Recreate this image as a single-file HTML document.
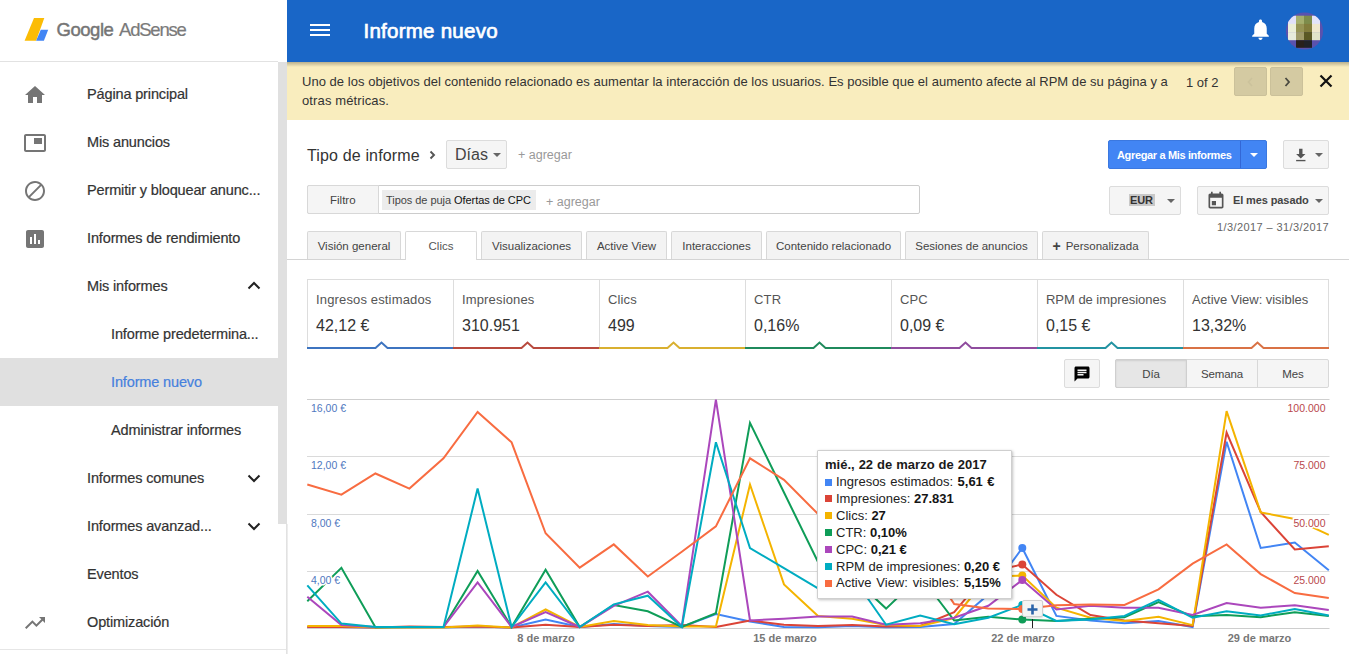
<!DOCTYPE html>
<html lang="es">
<head>
<meta charset="utf-8">
<title>Informe nuevo - Google AdSense</title>
<style>
*{box-sizing:border-box;margin:0;padding:0}
html,body{width:1349px;height:654px;overflow:hidden;background:#fff}
body{font-family:"Liberation Sans",sans-serif;color:#333;position:relative}
.abs{position:absolute}
.t{position:absolute;white-space:nowrap;line-height:1}
/* sidebar */
#side{position:absolute;left:0;top:0;width:287px;height:654px;background:#fff}
#side .edge{position:absolute;left:286px;top:524px;width:2px;height:130px;background:linear-gradient(to right,#dcdcdc,#f2f2f2)}
#side .logo-line{position:absolute;left:0;top:61px;width:278px;height:1px;background:#e2e2e2}
#side .thumb{position:absolute;left:278px;top:62px;width:9.400px;height:462px;background:#e0e0e0}
#side .sel{position:absolute;left:0;top:358px;width:278px;height:48px;background:#e0e0e0}
.nav{position:absolute;font-size:14.5px;letter-spacing:-0.14px;-webkit-text-stroke:0.2px currentColor;color:#333;white-space:nowrap;line-height:18px;height:18px}
.nav.l1{left:87px}
.nav.l2{left:111px}
/* header */
#hdr{position:absolute;left:287px;top:0;width:1062px;height:62px;background:#1966c7}
#hdr-shadow{position:absolute;left:287px;top:62px;width:1062px;height:5px;background:linear-gradient(rgba(0,0,0,.26),rgba(0,0,0,0))}
#notice{position:absolute;left:287px;top:62px;width:1062px;height:58px;background:#f9edbe}
.btn{position:absolute;background:#f5f5f5;border:1px solid #dcdcdc;border-radius:2px}
.tab{position:absolute;top:231px;height:28px;background:#f3f3f3;border:1px solid #d8d8d8;border-bottom:none;border-radius:2px 2px 0 0;font-size:11.5px;color:#444;text-align:center;line-height:29px;white-space:nowrap}
.card{position:absolute;top:279px;height:69px;width:147px;border:1px solid #ddd;border-bottom:none;background:#fff}
.card .l{position:absolute;left:8px;top:12px;letter-spacing:0.15px;font-size:13px;color:#555;white-space:nowrap;line-height:15px}
.card .v{position:absolute;left:8px;top:36px;font-size:16px;color:#333;white-space:nowrap;line-height:19px}
.tt{position:absolute;font-size:13px;color:#222;white-space:nowrap;line-height:15px;font-family:"Liberation Sans",sans-serif}
.tt b{color:#151515}
.sq{position:absolute;width:7px;height:7px;left:825px}
.axl{position:absolute;font-size:10.500px;line-height:12px;white-space:nowrap;-webkit-text-stroke:3px #fff;paint-order:stroke fill}
</style>
</head>
<body>

<!-- ================= SIDEBAR ================= -->
<div id="side">
  <svg class="abs" style="left:24px;top:17px" width="26" height="26" viewBox="0 0 26 26">
    <polygon points="10,1 20.3,1 12.1,23.7 0.6,23.7" fill="#fbbc05"/>
    <polygon points="16.8,12.8 24.2,12.8 19.9,23.7 12.1,23.7" fill="#4285f4"/>
  </svg>
  <div class="t" style="left:56.500px;top:21px;font-size:18.500px;color:#757575;letter-spacing:-0.45px;-webkit-text-stroke:0.45px #757575">Google</div>
  <div class="t" style="left:119px;top:21px;font-size:18.500px;color:#7a7a7a;letter-spacing:-1.2px;-webkit-text-stroke:0.2px #7a7a7a">AdSense</div>
  <div class="logo-line"></div>
  <div class="thumb"></div><div class="edge"></div>
  <div class="sel"></div>

  <!-- icons -->
  <svg class="abs" style="left:23px;top:83px" width="24" height="24" viewBox="0 0 24 24"><path d="M10 20v-6h4v6h5v-8h3L12 3 2 12h3v8z" fill="#757575"/></svg>
  <svg class="abs" style="left:23px;top:131px" width="24" height="24" viewBox="0 0 24 24"><path d="M19 7h-8v6h8V7zm2-4H3c-1.1 0-2 .9-2 2v14c0 1.1.9 1.98 2 1.98h18c1.1 0 2-.88 2-1.98V5c0-1.1-.9-2-2-2zm0 16.01H3V4.98h18v14.03z" fill="#757575"/></svg>
  <svg class="abs" style="left:23px;top:179px" width="24" height="24" viewBox="0 0 24 24"><path d="M12 2C6.48 2 2 6.48 2 12s4.480 10 10 10 10-4.480 10-10S17.520 2 12 2zM4 12c0-4.420 3.580-8 8-8 1.850 0 3.550.63 4.900 1.690L5.690 16.900C4.630 15.550 4 13.850 4 12zm8 8c-1.850 0-3.550-.63-4.900-1.690L18.310 7.100C19.370 8.450 20 10.150 20 12c0 4.420-3.580 8-8 8z" fill="#757575"/></svg>
  <svg class="abs" style="left:23px;top:227px" width="24" height="24" viewBox="0 0 24 24"><path d="M19 3H5c-1.100 0-2 .9-2 2v14c0 1.100.9 2 2 2h14c1.100 0 2-.9 2-2V5c0-1.100-.9-2-2-2zM9 17H7v-7h2v7zm4 0h-2V7h2v10zm4 0h-2v-4h2v4z" fill="#757575"/></svg>
  <svg class="abs" style="left:23px;top:611px" width="24" height="24" viewBox="0 0 24 24"><path d="M16 6l2.290 2.290-4.880 4.880-4-4L2 16.590 3.410 18l6-6 4 4 6.300-6.290L22 12V6z" fill="#757575"/></svg>

  <div class="nav l1" style="top:85px">Página principal</div>
  <div class="nav l1" style="top:133px">Mis anuncios</div>
  <div class="nav l1" style="top:181px">Permitir y bloquear anunc...</div>
  <div class="nav l1" style="top:229px">Informes de rendimiento</div>
  <div class="nav l1" style="top:277px">Mis informes</div>
  <div class="nav l2" style="top:325px">Informe predetermina...</div>
  <div class="nav l2" style="top:373px;color:#4680dd">Informe nuevo</div>
  <div class="nav l2" style="top:421px">Administrar informes</div>
  <div class="nav l1" style="top:469px">Informes comunes</div>
  <div class="nav l1" style="top:517px">Informes avanzad...</div>
  <div class="nav l1" style="top:565px">Eventos</div>
  <div class="nav l1" style="top:613px">Optimización</div>

  <!-- chevrons -->
  <svg class="abs" style="left:242px;top:274px" width="24" height="24" viewBox="0 0 24 24"><path d="M6.500 14.500L12 9l5.500 5.500" fill="none" stroke="#222" stroke-width="2"/></svg>
  <svg class="abs" style="left:242px;top:466px" width="24" height="24" viewBox="0 0 24 24"><path d="M6.500 9.500L12 15l5.500-5.500" fill="none" stroke="#222" stroke-width="2"/></svg>
  <svg class="abs" style="left:242px;top:514px" width="24" height="24" viewBox="0 0 24 24"><path d="M6.500 9.500L12 15l5.500-5.500" fill="none" stroke="#222" stroke-width="2"/></svg>
  <div class="abs" style="left:0;top:649px;width:286px;height:1px;background:#e6e6e6"></div>
</div>

<!-- ================= HEADER ================= -->
<div id="notice"></div>
<div id="hdr">
  <svg class="abs" style="left:23px;top:24px" width="20" height="12" viewBox="0 0 20 12"><path d="M0 1h20M0 6h20M0 11h20" stroke="#fff" stroke-width="2" fill="none"/></svg>
  <div class="t" style="left:76.500px;top:21.300px;font-size:20.500px;color:#fff;letter-spacing:0.25px;-webkit-text-stroke:0.7px #fff">Informe nuevo</div>
  <svg class="abs" style="left:961.200px;top:17px" width="25" height="25" viewBox="0 0 24 24"><path d="M12 22c1.100 0 2-.9 2-2h-4c0 1.100.89 2 2 2zm6-6v-5c0-3.070-1.640-5.640-4.500-6.320V4c0-.83-.67-1.500-1.500-1.500s-1.500.67-1.500 1.500v.68C7.630 5.360 6 7.920 6 11v5l-2 2v1h16v-1l-2-2z" fill="#fff"/></svg>
  <svg class="abs" style="left:998px;top:12px" width="40" height="40" viewBox="0 0 40 40">
    <defs><clipPath id="av"><circle cx="19.500" cy="19" r="18.600"/></clipPath></defs>
    <g clip-path="url(#av)">
      <rect width="40" height="40" fill="#5a52ae"/>
      <rect x="3" y="3.700" width="8" height="8.300" fill="#e1e1fa"/><rect x="11" y="3.700" width="8" height="8.300" fill="#a5af6e"/><rect x="19" y="3.700" width="8" height="8.300" fill="#7d8c4b"/><rect x="27" y="3.700" width="8" height="8.300" fill="#e1e4fa"/>
      <rect x="3" y="11.900" width="8" height="8.300" fill="#ebeed7"/><rect x="11" y="11.900" width="8" height="8.300" fill="#969455"/><rect x="19" y="11.900" width="8" height="8.300" fill="#827d3c"/><rect x="27" y="11.900" width="8" height="8.300" fill="#eee8cd"/>
      <rect x="3" y="20.100" width="8" height="8.100" fill="#e8ebdc"/><rect x="11" y="20.100" width="8" height="8.100" fill="#a09b69"/><rect x="19" y="20.100" width="8" height="8.100" fill="#5a5823"/><rect x="27" y="20.100" width="8" height="8.100" fill="#e1e4c8"/>
      <rect x="11" y="28.200" width="8" height="7.600" fill="#28201c"/><rect x="19" y="28.200" width="8" height="7.600" fill="#202228"/>
    </g>
  </svg>
</div>
<div id="hdr-shadow"></div>

<!-- notice text -->
<div class="t" style="left:302px;top:75px;font-size:13px;color:#333;letter-spacing:0.035px">Uno de los objetivos del contenido relacionado es aumentar la interacción de los usuarios. Es posible que el aumento afecte al RPM de su página y a</div>
<div class="t" style="left:302px;top:94px;font-size:13px;color:#333;letter-spacing:0.12px">otras métricas.</div>
<div class="t" style="left:1186px;top:76px;font-size:13px;color:#333">1 of 2</div>
<div class="abs" style="left:1234px;top:67px;width:33px;height:29px;background:#d4caa2;border-radius:2px;border:1px solid #cbc19a"></div>
<div class="abs" style="left:1270px;top:67px;width:33px;height:29px;background:#d4caa2;border-radius:2px;border:1px solid #cbc19a"></div>
<svg class="abs" style="left:1244px;top:75px" width="14" height="14" viewBox="0 0 14 14"><path d="M8 3L4.500 7 8 11" fill="none" stroke="#cbc29c" stroke-width="1.600"/></svg>
<svg class="abs" style="left:1280px;top:75px" width="14" height="14" viewBox="0 0 14 14"><path d="M5.500 3L9 7l-3.500 4" fill="none" stroke="#4a4a40" stroke-width="1.800"/></svg>
<svg class="abs" style="left:1319px;top:74px" width="14" height="14" viewBox="0 0 14 14"><path d="M1.500 1.500l11 11M12.500 1.500l-11 11" fill="none" stroke="#111" stroke-width="2.200"/></svg>


<!-- ================= CONTROLS ================= -->
<div class="t" style="left:307px;top:148px;font-size:16px;color:#333;letter-spacing:0.15px">Tipo de informe</div>
<svg class="abs" style="left:427px;top:148.700px" width="10" height="12" viewBox="0 0 10 12"><path d="M3.500 2.500L7 6l-3.500 3.500" fill="none" stroke="#555" stroke-width="1.900"/></svg>
<div class="btn" style="left:446px;top:140px;width:61px;height:29px"></div>
<div class="t" style="left:455px;top:147px;font-size:16px;color:#444">Días</div>
<svg class="abs" style="left:493px;top:153px" width="8" height="4" viewBox="0 0 8 4"><path d="M0 0h8L4 4z" fill="#666"/></svg>
<div class="t" style="left:518px;top:149px;font-size:12.5px;color:#999">+ agregar</div>

<div class="abs" style="left:307px;top:185px;width:613px;height:29px;border:1px solid #ccc;border-radius:2px;background:#fff"></div>
<div class="abs" style="left:307px;top:185px;width:72px;height:29px;border:1px solid #d8d8d8;border-radius:2px 0 0 2px;background:#f5f5f5"></div>
<div class="t" style="left:330px;top:195px;font-size:11.5px;color:#444">Filtro</div>
<div class="abs" style="left:382px;top:190px;width:154px;height:20px;background:#ececec"></div>
<div class="t" style="left:386px;top:195px;font-size:11px;color:#444;letter-spacing:-0.05px">Tipos de puja <span style="color:#111">Ofertas de CPC</span></div>
<div class="t" style="left:546px;top:195.500px;font-size:12.500px;color:#999">+ agregar</div>

<div class="abs" style="left:1108px;top:140px;width:159px;height:29px;background:#4285f4;border-radius:2px;border:1px solid #3b78e0"></div>
<div class="abs" style="left:1240px;top:141px;width:1px;height:27px;background:#3367d6"></div>
<div class="t" style="left:1117px;top:150px;font-size:11px;color:#fff;font-weight:bold;letter-spacing:-0.35px">Agregar a Mis informes</div>
<svg class="abs" style="left:1250px;top:153px" width="8" height="4" viewBox="0 0 8 4"><path d="M0 0h8L4 4z" fill="#fff"/></svg>

<div class="btn" style="left:1283px;top:140px;width:46px;height:29px"></div>
<svg class="abs" style="left:1293.500px;top:147.500px" width="13.600" height="14.450" viewBox="0 0 16 17"><path d="M6 1h4v6h3.500L8 12.500 2.500 7H6z" fill="#555"/><rect x="2.500" y="14" width="11" height="1.600" fill="#555"/></svg>
<svg class="abs" style="left:1315px;top:153px" width="8" height="4" viewBox="0 0 8 4"><path d="M0 0h8L4 4z" fill="#666"/></svg>

<div class="btn" style="left:1109px;top:186px;width:72px;height:29px"></div>
<div class="abs" style="left:1129px;top:194px;width:26px;height:12px;background:#c9c9c9"></div>
<div class="t" style="left:1130px;top:195px;font-size:11px;color:#333;font-weight:bold;letter-spacing:-0.1px">EUR</div>
<svg class="abs" style="left:1167px;top:199px" width="8" height="4" viewBox="0 0 8 4"><path d="M0 0h8L4 4z" fill="#666"/></svg>

<div class="btn" style="left:1197px;top:186px;width:132px;height:29px"></div>
<svg class="abs" style="left:1205.500px;top:191px" width="20" height="20" viewBox="0 0 24 24"><path d="M17 12h-5v5h5v-5zM16 1v2H8V1H6v2H5c-1.110 0-1.990.9-1.990 2L3 19c0 1.100.89 2 2 2h14c1.100 0 2-.9 2-2V5c0-1.100-.9-2-2-2h-1V1h-2zm3 18H5V8h14v11z" fill="#555" transform="translate(24,0) scale(-1,1)"/></svg>
<div class="t" style="left:1233px;top:195px;font-size:11px;color:#333;font-weight:bold;letter-spacing:-0.11px;color:#444">El mes pasado</div>
<svg class="abs" style="left:1315px;top:199px" width="8" height="4" viewBox="0 0 8 4"><path d="M0 0h8L4 4z" fill="#666"/></svg>
<div class="t" style="left:1217px;top:222px;font-size:11px;color:#666;letter-spacing:0.4px">1/3/2017 – 31/3/2017</div>


<!-- ================= TABS ================= -->
<div class="abs" style="left:287px;top:259px;width:1062px;height:1px;background:#d4d4d4"></div>
<div class="tab" style="left:307px;width:94px">Visión general</div>
<div class="tab" style="left:405px;width:72px;background:#fff;color:#555;height:29px">Clics</div>
<div class="tab" style="left:481px;width:101px">Visualizaciones</div>
<div class="tab" style="left:586px;width:81px">Active View</div>
<div class="tab" style="left:671px;width:91px">Interacciones</div>
<div class="tab" style="left:766px;width:135px">Contenido relacionado</div>
<div class="tab" style="left:905px;width:133px">Sesiones de anuncios</div>
<div class="tab" style="left:1042px;width:107px"><span style="font-size:14px;font-weight:bold;vertical-align:-1px;margin-right:5px">+</span>Personalizada</div>


<!-- ================= CARDS ================= -->
<div class="card" style="left:307px"><div class="l">Ingresos estimados</div><div class="v">42,12 €</div></div>
<svg class="abs" style="left:307px;top:339px" width="147" height="11" viewBox="0 0 147 11"><path d="M0 9H68.500 L74.500 3.500 L80.500 9 H147" fill="#fff" stroke="#3d74c0" stroke-width="2" stroke-linejoin="miter"/></svg>
<div class="card" style="left:453px"><div class="l">Impresiones</div><div class="v">310.951</div></div>
<svg class="abs" style="left:453px;top:339px" width="147" height="11" viewBox="0 0 147 11"><path d="M0 9H68.500 L74.500 3.500 L80.500 9 H147" fill="#fff" stroke="#b84a3e" stroke-width="2" stroke-linejoin="miter"/></svg>
<div class="card" style="left:599px"><div class="l">Clics</div><div class="v">499</div></div>
<svg class="abs" style="left:599px;top:339px" width="147" height="11" viewBox="0 0 147 11"><path d="M0 9H68.500 L74.500 3.500 L80.500 9 H147" fill="#fff" stroke="#d9b030" stroke-width="2" stroke-linejoin="miter"/></svg>
<div class="card" style="left:745px"><div class="l">CTR</div><div class="v">0,16%</div></div>
<svg class="abs" style="left:745px;top:339px" width="147" height="11" viewBox="0 0 147 11"><path d="M0 9H68.500 L74.500 3.500 L80.500 9 H147" fill="#fff" stroke="#1f8a5c" stroke-width="2" stroke-linejoin="miter"/></svg>
<div class="card" style="left:891px"><div class="l">CPC</div><div class="v">0,09 €</div></div>
<svg class="abs" style="left:891px;top:339px" width="147" height="11" viewBox="0 0 147 11"><path d="M0 9H68.500 L74.500 3.500 L80.500 9 H147" fill="#fff" stroke="#8f4c9e" stroke-width="2" stroke-linejoin="miter"/></svg>
<div class="card" style="left:1037px"><div class="l" style="letter-spacing:-0.03px">RPM de impresiones</div><div class="v">0,15 €</div></div>
<svg class="abs" style="left:1037px;top:339px" width="147" height="11" viewBox="0 0 147 11"><path d="M0 9H68.500 L74.500 3.500 L80.500 9 H147" fill="#fff" stroke="#2393a2" stroke-width="2" stroke-linejoin="miter"/></svg>
<div class="card" style="left:1183px;width:146px"><div class="l" style="letter-spacing:-0.03px">Active View: visibles</div><div class="v">13,32%</div></div>
<svg class="abs" style="left:1183px;top:339px" width="146" height="11" viewBox="0 0 146 11"><path d="M0 9H68.500 L74.500 3.500 L80.500 9 H147" fill="#fff" stroke="#d97245" stroke-width="2" stroke-linejoin="miter"/></svg>


<!-- ================= CHART ================= -->
<div class="btn" style="left:1064px;top:359px;width:36px;height:29px"></div>
<svg class="abs" style="left:1073px;top:365px" width="18" height="18" viewBox="0 0 24 24"><path d="M20 2H4c-1.100 0-1.990.9-1.990 2L2 22l4-4h14c1.100 0 2-.9 2-2V4c0-1.100-.9-2-2-2zM6 9h12v2H6V9zm8 5H6v-2h8v2zm4-6H6V6h12v2z" fill="#000"/></svg>
<div class="abs" style="left:1115px;top:359px;width:214px;height:29px;background:#f5f5f5;border:1px solid #d8d8d8;border-radius:2px"></div>
<div class="abs" style="left:1115px;top:359px;width:72px;height:29px;background:#e6e6e6;border:1px solid #cfcfcf;border-radius:2px 0 0 2px;box-shadow:inset 0 1px 2px rgba(0,0,0,.1)"></div>
<div class="abs" style="left:1257px;top:360px;width:1px;height:27px;background:#d8d8d8"></div>
<div class="t" style="left:1115px;width:72px;text-align:center;top:369px;font-size:11.500px;letter-spacing:-0.15px;color:#444">Día</div>
<div class="t" style="left:1187px;width:70px;text-align:center;top:369px;font-size:11.500px;letter-spacing:-0.15px;color:#444">Semana</div>
<div class="t" style="left:1258px;width:70px;text-align:center;top:369px;font-size:11.500px;letter-spacing:-0.15px;color:#444">Mes</div>

<svg class="abs" style="left:0;top:0" width="1349" height="654" viewBox="0 0 1349 654"><line x1="307" x2="1329.5" y1="399.5" y2="399.5" stroke="#cfcfcf" stroke-width="1"/><line x1="307" x2="1329.5" y1="456.5" y2="456.5" stroke="#dadada" stroke-width="1"/><line x1="307" x2="1329.5" y1="514.5" y2="514.5" stroke="#dadada" stroke-width="1"/><line x1="307" x2="1329.5" y1="571.5" y2="571.5" stroke="#dadada" stroke-width="1"/><line x1="307" x2="1329.5" y1="628.5" y2="628.5" stroke="#cecece" stroke-width="1"/><polyline points="307.3,627.0 341.4,627.0 375.4,627.5 409.4,627.5 443.5,627.5 477.6,626.5 511.6,627.5 545.6,619.6 579.7,627.0 613.8,624.0 647.8,626.0 681.8,627.0 715.9,614.0 750.0,621.4 784.0,627.0 818.0,627.3 852.1,626.0 886.1,627.3 920.2,627.0 954.2,624.0 988.3,594.5 1022.3,548.0 1056.4,615.9 1090.5,620.5 1124.5,623.3 1158.5,620.9 1192.6,627.0 1226.6,441.8 1260.7,548.0 1294.8,542.5 1328.8,570.3" fill="none" stroke="#4285f4" stroke-width="2"/><polyline points="307.3,627.0 341.4,627.0 375.4,627.5 409.4,626.5 443.5,627.0 477.6,626.5 511.6,627.5 545.6,624.7 579.7,627.0 613.8,624.7 647.8,626.0 681.8,625.0 715.9,627.0 750.0,620.5 784.0,624.7 818.0,626.0 852.1,625.0 886.1,626.5 920.2,626.0 954.2,612.2 988.3,571.7 1022.3,564.5 1056.4,594.8 1090.5,615.0 1124.5,620.5 1158.5,623.3 1192.6,626.0 1226.6,432.6 1260.7,512.0 1294.8,549.5 1328.8,546.2" fill="none" stroke="#db4437" stroke-width="2"/><polyline points="307.3,626.0 341.4,626.0 375.4,627.5 409.4,627.5 443.5,627.5 477.6,625.5 511.6,627.5 545.6,609.5 579.7,627.0 613.8,620.9 647.8,625.0 681.8,626.5 715.9,626.5 750.0,484.5 784.0,584.4 818.0,616.0 852.1,618.7 886.1,625.0 920.2,626.0 954.2,618.0 988.3,576.5 1022.3,575.5 1056.4,607.7 1090.5,617.8 1124.5,621.0 1158.5,616.8 1192.6,625.1 1226.6,411.1 1260.7,512.4 1294.8,519.0 1328.8,534.8" fill="none" stroke="#f4b400" stroke-width="2"/><polyline points="307.3,601.2 341.4,567.8 375.4,627.3 409.4,627.0 443.5,627.0 477.6,571.0 511.6,627.0 545.6,569.7 579.7,627.0 613.8,605.0 647.8,611.3 681.8,627.0 715.9,613.2 750.0,422.9 784.0,492.5 818.0,562.0 852.1,576.8 886.1,608.6 920.2,576.0 954.2,620.5 988.3,616.8 1022.3,619.6 1056.4,621.0 1090.5,618.7 1124.5,617.2 1158.5,602.2 1192.6,616.3 1226.6,615.0 1260.7,617.2 1294.8,612.2 1328.8,616.0" fill="none" stroke="#0f9d58" stroke-width="2"/><polyline points="307.3,596.7 341.4,625.0 375.4,627.0 409.4,627.0 443.5,627.0 477.6,582.5 511.6,627.0 545.6,612.2 579.7,627.0 613.8,605.8 647.8,591.7 681.8,626.0 715.9,399.6 750.0,620.5 784.0,618.7 818.0,616.5 852.1,616.5 886.1,624.7 920.2,623.3 954.2,617.8 988.3,605.8 1022.3,580.1 1056.4,609.5 1090.5,605.8 1124.5,607.7 1158.5,607.7 1192.6,615.0 1226.6,603.0 1260.7,607.7 1294.8,605.3 1328.8,610.0" fill="none" stroke="#ab47bc" stroke-width="2"/><polyline points="307.3,585.3 341.4,623.6 375.4,627.0 409.4,627.0 443.5,627.0 477.6,488.6 511.6,627.0 545.6,582.5 579.7,627.0 613.8,604.4 647.8,595.7 681.8,627.0 715.9,442.3 750.0,548.0 784.0,568.2 818.0,588.4 852.1,576.0 886.1,624.7 920.2,615.5 954.2,624.2 988.3,617.8 1022.3,604.9 1056.4,621.0 1090.5,619.6 1124.5,616.0 1158.5,599.8 1192.6,617.8 1226.6,611.3 1260.7,615.5 1294.8,609.0 1328.8,615.5" fill="none" stroke="#00acc1" stroke-width="2"/><polyline points="307.3,484.5 341.4,494.6 375.4,473.5 409.4,488.6 443.5,458.3 477.6,411.9 511.6,442.3 545.6,533.3 579.7,567.7 613.8,544.4 647.8,576.5 681.8,551.7 715.9,526.4 750.0,458.3 784.0,479.8 818.0,514.0 852.1,530.0 886.1,542.0 920.2,552.0 954.2,604.0 988.3,608.6 1022.3,609.0 1056.4,605.3 1090.5,604.5 1124.5,604.9 1158.5,589.3 1192.6,563.6 1226.6,544.4 1260.7,574.1 1294.8,593.0 1328.8,598.1" fill="none" stroke="#f86c41" stroke-width="2"/><circle cx="1022.3" cy="548.0" r="4" fill="#4285f4"/><circle cx="1022.3" cy="564.5" r="4" fill="#db4437"/><circle cx="1022.3" cy="575.5" r="4" fill="#f4b400"/><circle cx="1022.3" cy="619.6" r="4" fill="#0f9d58"/><circle cx="1022.3" cy="580.1" r="4" fill="#ab47bc"/><circle cx="1022.3" cy="604.9" r="4" fill="#00acc1"/><circle cx="1022.3" cy="609.0" r="4" fill="#f86c41"/></svg>

<div class="axl" style="left:311px;top:402px;color:#4f78c0">16,00 €</div>
<div class="axl" style="left:311px;top:459px;color:#4f78c0">12,00 €</div>
<div class="axl" style="left:311px;top:517px;color:#4f78c0">8,00 €</div>
<div class="axl" style="left:311px;top:574px;color:#4f78c0">4,00 €</div>
<div class="axl" style="right:23.500px;top:402px;color:#b9484c">100.000</div>
<div class="axl" style="right:23.500px;top:459px;color:#b9484c">75.000</div>
<div class="axl" style="right:23.500px;top:517px;color:#b9484c">50.000</div>
<div class="axl" style="right:23.500px;top:574px;color:#b9484c">25.000</div>
<div class="axl" style="left:496px;width:100px;text-align:center;top:632px;color:#777;font-weight:bold;font-size:11px">8 de marzo</div>
<div class="axl" style="left:735px;width:100px;text-align:center;top:632px;color:#777;font-weight:bold;font-size:11px">15 de marzo</div>
<div class="axl" style="left:973px;width:100px;text-align:center;top:632px;color:#777;font-weight:bold;font-size:11px">22 de marzo</div>
<div class="axl" style="left:1209.500px;width:100px;text-align:center;top:632px;color:#777;font-weight:bold;font-size:11px">29 de marzo</div>

<!-- annotation marker -->
<div class="abs" style="left:1032px;top:619px;width:1px;height:9px;background:#222"></div>
<div class="abs" style="left:1022px;top:599.500px;width:20.500px;height:17.500px;background:#f4f4f4;border:1px solid #d0d0d0;border-radius:2px;box-shadow:0 1px 2px rgba(0,0,0,.15)"></div>
<svg class="abs" style="left:1027px;top:603.800px" width="11" height="11" viewBox="0 0 11 11"><path d="M5.500 0.500v10M0.500 5.500h10" stroke="#2a63a8" stroke-width="2.600" fill="none"/></svg>

<!-- tooltip -->
<div class="abs" style="left:817px;top:450px;width:195px;height:149px;background:#fff;border:1px solid #cfcfcf;border-radius:1px;box-shadow:1px 1px 3px rgba(0,0,0,.25)"></div>
<div class="tt" style="left:825px;top:457px;font-weight:bold;color:#1a1a1a;word-spacing:0.4px">mié., 22 de marzo de 2017</div>
<div class="sq" style="top:478.5px;background:#4285f4"></div><div class="tt" style="left:836px;top:474.0px;word-spacing:0.8px">Ingresos estimados: <b>5,61 €</b></div>
<div class="sq" style="top:495.4px;background:#db4437"></div><div class="tt" style="left:836px;top:490.9px">Impresiones: <b>27.831</b></div>
<div class="sq" style="top:512.3px;background:#f4b400"></div><div class="tt" style="left:836px;top:507.8px">Clics: <b>27</b></div>
<div class="sq" style="top:529.2px;background:#0f9d58"></div><div class="tt" style="left:836px;top:524.7px">CTR: <b>0,10%</b></div>
<div class="sq" style="top:546.1px;background:#ab47bc"></div><div class="tt" style="left:836px;top:541.6px">CPC: <b>0,21 €</b></div>
<div class="sq" style="top:563.0px;background:#00acc1"></div><div class="tt" style="left:836px;top:558.5px">RPM de impresiones: <b>0,20 €</b></div>
<div class="sq" style="top:579.9px;background:#f86c41"></div><div class="tt" style="left:836px;top:575.4px;word-spacing:1.3px">Active View: visibles: <b>5,15%</b></div>

</body>
</html>
